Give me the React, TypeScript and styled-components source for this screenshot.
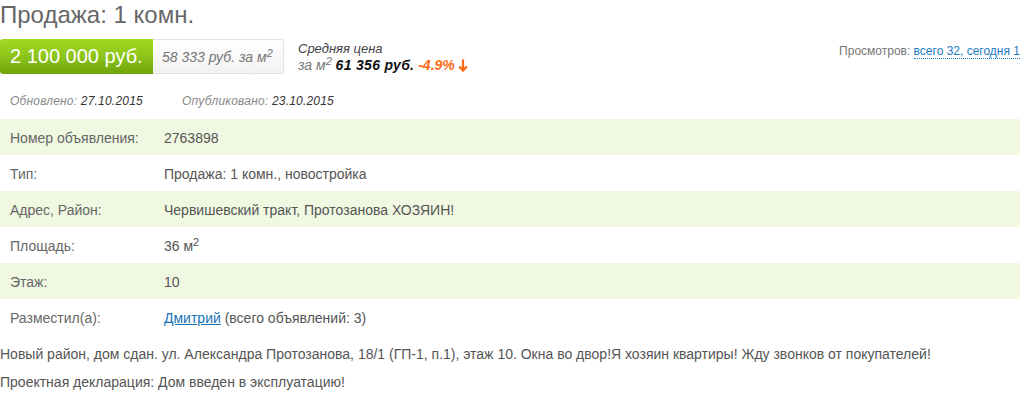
import React from "react";
import styled, { createGlobalStyle } from "styled-components";

const Global = createGlobalStyle`
  body { margin: 0; background: #fff; font-family: "Liberation Sans", Arial, sans-serif; }
`;

const Page = styled.div`
  width: 1020px;
`;

const Title = styled.h1`
  margin: 0;
  font-size: 24px;
  line-height: 30px;
  font-weight: normal;
  color: #666;
`;

const PriceRow = styled.div`
  display: flex;
  align-items: flex-start;
  margin-top: 9px;
`;

const PriceMain = styled.div`
  width: 153px;
  height: 35px;
  box-sizing: border-box;
  padding-left: 10px;
  display: flex;
  align-items: center;
  color: #fff;
  font-size: 20px;
  border-radius: 3px 0 0 3px;
  background: linear-gradient(to bottom, #a3d923 0%, #8cc419 50%, #70a30c 100%);
`;

const PricePerM = styled.div`
  width: 131px;
  height: 35px;
  box-sizing: border-box;
  padding-left: 9px;
  display: flex;
  align-items: center;
  font-size: 14px;
  font-style: italic;
  color: #777;
  border: 1px solid #e3e3e3;
  border-left: none;
  border-radius: 0 3px 3px 0;
  background: linear-gradient(to bottom, #ffffff 0%, #f2f2f2 100%);
`;

const Sup = styled.sup`
  font-size: 0.78em;
  line-height: 0;
  vertical-align: 0.5em;
`;

const Average = styled.div`
  margin-left: 14px;
  margin-top: 2px;
  font-style: italic;
  line-height: 16px;
`;

const AvgLine = styled.div<{ $muted?: boolean }>`
  color: ${(p) => (p.$muted ? "#777" : "#444")};
  font-size: ${(p) => (p.$muted ? "14px" : "13px")};
`;

const AvgValue = styled.b`
  color: #111;
  letter-spacing: 0.3px;
`;

const Change = styled.b<{ $color: string }>`
  color: ${(p) => p.$color};
`;

const Views = styled.div`
  margin-left: auto;
  margin-top: 5px;
  font-size: 12px;
  color: #777;
`;

const DottedLink = styled.a`
  color: #1a7bbf;
  text-decoration: none;
  border-bottom: 1px dotted #1a7bbf;
`;

const Dates = styled.div`
  display: flex;
  padding-left: 10px;
  margin-top: 20px;
  font-size: 12px;
  font-style: italic;
  line-height: 15px;
  color: #888;
  letter-spacing: 0.2px;
`;

const DateItem = styled.span<{ $width?: number }>`
  width: ${(p) => (p.$width ? `${p.$width}px` : "auto")};
`;

const DateValue = styled.span`
  color: #333;
`;

const Table = styled.div`
  margin-top: 10px;
`;

const Row = styled.div<{ $alt: boolean }>`
  display: flex;
  align-items: center;
  height: 36px;
  box-sizing: border-box;
  padding-top: 2px;
  font-size: 14px;
  background: ${(p) => (p.$alt ? "#f0f8e2" : "transparent")};
`;

const Label = styled.div`
  width: 164px;
  padding-left: 10px;
  box-sizing: border-box;
  color: #666;
`;

const Value = styled.div`
  color: #555;
`;

const UserLink = styled.a`
  color: #1a73b8;
  text-decoration: underline;
`;

const Description = styled.p`
  margin: 5px 0 0;
  font-size: 14px;
  line-height: 28px;
  color: #555;
`;

const Arrow = () => (
  <svg width="10" height="13" viewBox="0 0 10 13" style={{ verticalAlign: "-2px", marginLeft: 3 }}>
    <path d="M5 0.5 V11.5 M1.2 7.6 L5 11.6 L8.8 7.6" stroke="#ff6a13" strokeWidth="2.2" fill="none" />
  </svg>
);

const rows: { label: string; value: React.ReactNode }[] = [
  { label: "Номер объявления:", value: "2763898" },
  { label: "Тип:", value: "Продажа: 1 комн., новостройка" },
  { label: "Адрес, Район:", value: "Червишевский тракт, Протозанова ХОЗЯИН!" },
  {
    label: "Площадь:",
    value: (
      <>
        36 м<Sup>2</Sup>
      </>
    ),
  },
  { label: "Этаж:", value: "10" },
  {
    label: "Разместил(а):",
    value: (
      <>
        <UserLink href="#">Дмитрий</UserLink> (всего объявлений: 3)
      </>
    ),
  },
];

export default function App() {
  return (
    <Page>
      <Global />
      <Title>Продажа: 1 комн.</Title>
      <PriceRow>
        <PriceMain>2 100 000 руб.</PriceMain>
        <PricePerM>
          <span>
            58 333 руб. за м<Sup>2</Sup>
          </span>
        </PricePerM>
        <Average>
          <AvgLine>Средняя цена</AvgLine>
          <AvgLine $muted>
            за м<Sup>2</Sup> <AvgValue>61 356 руб.</AvgValue>{" "}
            <Change $color="#ff6a13">-4.9%</Change>
            <Arrow />
          </AvgLine>
        </Average>
        <Views>
          Просмотров: <DottedLink href="#">всего 32, сегодня 1</DottedLink>
        </Views>
      </PriceRow>
      <Dates>
        <DateItem $width={172}>
          Обновлено: <DateValue>27.10.2015</DateValue>
        </DateItem>
        <DateItem>
          Опубликовано: <DateValue>23.10.2015</DateValue>
        </DateItem>
      </Dates>
      <Table>
        {rows.map((r, i) => (
          <Row key={r.label} $alt={i % 2 === 0}>
            <Label>{r.label}</Label>
            <Value>{r.value}</Value>
          </Row>
        ))}
      </Table>
      <Description>
        Новый район, дом сдан. ул. Александра Протозанова, 18/1 (ГП-1, п.1), этаж 10. Окна во двор!Я хозяин квартиры! Жду звонков от покупателей!
        <br />
        Проектная декларация: Дом введен в эксплуатацию!
      </Description>
    </Page>
  );
}
